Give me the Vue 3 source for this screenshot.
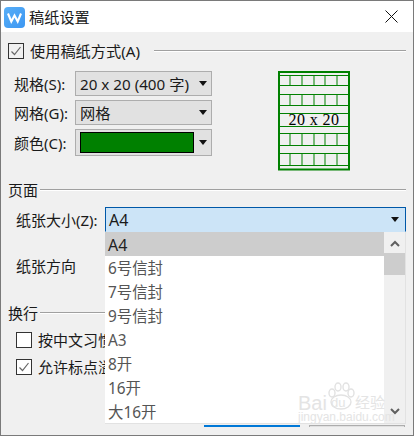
<script setup>
const items = ['A4', '6号信封', '7号信封', '9号信封', 'A3', '8开', '16开', '大16开']
const hLines = [75.5, 85.5, 94.5, 105.5, 113.5, 126.5, 133.5, 145.5, 153.5, 165.5]
const cellRows = [[75.5, 85.5], [94.5, 105.5], [133.5, 145.5], [153.5, 165.5]]
const vLines = [290.5, 302.5, 314.5, 325.5, 337.5]
</script>

<template>
  <div class="dialog">
    <header class="titlebar">
      <svg class="logo" width="21" height="21" viewBox="0 0 21 21">
        <defs>
          <linearGradient id="lg" x1="0" y1="0" x2="1" y2="1">
            <stop offset="0" stop-color="#57aef7" />
            <stop offset="1" stop-color="#3d97f2" />
          </linearGradient>
        </defs>
        <rect x="0" y="0" width="21" height="21" rx="4" fill="url(#lg)" />
        <path d="M4 6.5 L7.3 14.5 L10.5 8.5 L13.7 14.5 L17 6.5" fill="none" stroke="#fff" stroke-width="2.1" />
      </svg>
      <span class="title">稿纸设置</span>
      <svg class="close" width="13" height="13" viewBox="0 0 13 13">
        <path d="M0.5 0.5 L12.5 12.5 M12.5 0.5 L0.5 12.5" stroke="#111" stroke-width="1" fill="none" />
      </svg>
    </header>

    <main class="content">
      <div class="group-head">
        <span class="check">
          <svg width="14" height="14" viewBox="0 0 14 14"><path d="M2.5 7.5 L5.5 10.5 L11.5 3" fill="none" stroke="#666" stroke-width="1.2" /></svg>
        </span>
        <span class="gap-text">使用稿纸方式(A)</span>
        <span class="rule first-rule"></span>
      </div>

      <div class="top-block">
        <div class="fields">
          <div class="field">
            <label>规格(S):</label>
            <div class="select"><span>20 x 20 (400 字)</span><i class="caret"></i></div>
          </div>
          <div class="field">
            <label>网格(G):</label>
            <div class="select"><span>网格</span><i class="caret"></i></div>
          </div>
          <div class="field tall">
            <label>颜色(C):</label>
            <div class="select color"><b class="swatch"></b><i class="caret"></i></div>
          </div>
        </div>
        <svg class="preview" width="72" height="100" viewBox="278.5 71 72 100">
          <line v-for="y in hLines" :key="y" x1="280" x2="349" :y1="y" :y2="y" stroke="#008000" stroke-width="1" />
          <template v-for="r in cellRows" :key="r[0]">
            <line v-for="x in vLines" :key="x" :x1="x" :x2="x" :y1="r[0]" :y2="r[1]" stroke="#008000" stroke-width="1" />
          </template>
          <rect x="279.5" y="72" width="70" height="97.5" fill="none" stroke="#008000" stroke-width="2" />
          <text x="314.5" y="125" text-anchor="middle" class="preview-text">20 x 20</text>
        </svg>
      </div>

      <div class="group-head page-head">
        <span>页面</span>
        <span class="rule"></span>
      </div>

      <div class="paper-row">
        <label>纸张大小(Z):</label>
        <div class="combo-wrap">
          <div class="combo"><span class="big">A4</span><i class="caret"></i></div>
          <div class="dropdown">
            <ul class="list">
              <li v-for="(it, i) in items" :key="it" :class="{ active: i === 0 }">{{ it }}</li>
            </ul>
            <div class="scrollbar">
              <svg class="chev" width="10" height="7" viewBox="0 0 10 7"><path d="M1 6 L5 2 L9 6" fill="none" stroke="#606060" stroke-width="2" /></svg>
              <div class="thumb"></div>
              <svg class="chev down" width="10" height="7" viewBox="0 0 10 7"><path d="M1 1 L5 5 L9 1" fill="none" stroke="#606060" stroke-width="2" /></svg>
            </div>
            <div class="watermark">
              <svg class="paw" width="28" height="28" viewBox="0 0 28 28">
                <g fill="none" stroke="#e2e2e2" stroke-width="1.4">
                  <ellipse cx="5" cy="11" rx="3" ry="4" />
                  <ellipse cx="11" cy="5" rx="3" ry="4" />
                  <ellipse cx="19" cy="5" rx="3" ry="4" />
                  <ellipse cx="24" cy="11" rx="3" ry="4" />
                  <ellipse cx="14" cy="20" rx="10" ry="7" />
                </g>
              </svg>
              <span class="wm-bai">Bai</span>
              <span class="wm-du">du</span>
              <span class="wm-cn">经验</span>
              <span class="wm-url">jingyan.baidu.com</span>
            </div>
          </div>
        </div>
      </div>

      <div class="direction-row">纸张方向</div>

      <div class="group-head wrap-head">
        <span>换行</span>
        <span class="rule"></span>
      </div>

      <div class="option">
        <span class="check"></span>
        <span class="option-text">按中文习惯控制首尾字符</span>
      </div>
      <div class="option">
        <span class="check">
          <svg width="14" height="14" viewBox="0 0 14 14"><path d="M2.5 7.5 L5.5 10.5 L11.5 3" fill="none" stroke="#666" stroke-width="1.2" /></svg>
        </span>
        <span class="option-text">允许标点溢出边界</span>
      </div>

      <footer class="footer">
        <div class="btn primary"></div>
        <div class="btn"></div>
      </footer>
    </main>
  </div>
</template>

<style>
html, body { margin: 0; padding: 0; background: #f0f0f0; }
</style>

<style scoped>
.dialog {
  width: 414px;
  height: 436px;
  box-sizing: border-box;
  border: 1px solid #7a7a7a;
  display: flex;
  flex-direction: column;
  overflow: hidden;
  background: #f0f0f0;
  color: #1a1a1a;
  font-family: "Noto Sans", "Noto Sans CJK SC", sans-serif;
  font-size: 15px;
  line-height: 20px;
}
.titlebar {
  height: 31px;
  flex: none;
  background: #fff;
  display: flex;
  align-items: center;
  padding: 0 15px 0 3px;
}
.logo { flex: none; margin-top: 1px; }
.title { margin-left: 4px; font-size: 15.2px; }
.close { margin-left: auto; margin-top: -1px; }
.content {
  flex: 1;
  min-height: 0;
  display: flex;
  flex-direction: column;
  padding: 9px 7px 8px 7px;
}
.group-head {
  height: 20px;
  display: flex;
  align-items: center;
  flex: none;
}
.gap-text { margin-left: 6px; font-size: 15.2px; }
.rule {
  flex: 1;
  height: 1px;
  background: #a0a0a0;
  margin-left: 2px;
  margin-top: -1px;
  box-shadow: 0 1px 0 #fff;
}
.first-rule { margin-left: 14px; margin-top: -2px; }
.check {
  width: 14px;
  height: 14px;
  flex: none;
  border: 1px solid #333;
  background: #fff;
  display: inline-flex;
}
.group-head > .check { background: transparent; }
.top-block {
  margin-top: 10px;
  height: 99px;
  display: flex;
  align-items: flex-start;
  flex: none;
}
.fields {
  display: flex;
  flex-direction: column;
  gap: 4px;
}
.field {
  display: flex;
  align-items: center;
  height: 25px;
  padding-left: 6px;
}
.field.tall { height: 27px; }
.field label { width: 61px; flex: none; }
.select {
  width: 137px;
  height: 100%;
  box-sizing: border-box;
  border: 1px solid #adadad;
  background: #e1e1e1;
  display: flex;
  align-items: center;
  padding: 0 4px 0 4px;
  white-space: nowrap;
  font-size: 15.2px;
}
.caret {
  margin-left: auto;
  flex: none;
  width: 0;
  height: 0;
  border-left: 4px solid transparent;
  border-right: 4px solid transparent;
  border-top: 5px solid #111;
}
.swatch {
  display: block;
  width: 114px;
  height: 21px;
  box-sizing: border-box;
  background: #008000;
  border: 1px solid #000;
}
.preview { margin-left: 66px; flex: none; display: block; }
.preview-text {
  font-family: "Liberation Serif", serif;
  font-size: 16px;
  letter-spacing: 0.4px;
  fill: #000;
}
.page-head { margin-top: 10px; }
.paper-row {
  margin-top: 7px;
  height: 25px;
  flex: none;
  display: flex;
  align-items: center;
  padding-left: 8px;
}
.paper-row label { width: 89px; flex: none; }
.combo-wrap {
  width: 301px;
  height: 25px;
  position: relative;
  flex: none;
}
.combo {
  height: 25px;
  box-sizing: border-box;
  border: 1px solid #0058a8;
  border-bottom-color: #cce4f7;
  background: #cce4f7;
  display: flex;
  align-items: center;
  padding: 0 6px 0 3px;
}
.big { font-size: 16px; }
.dropdown {
  position: absolute;
  top: 25px;
  left: 0;
  width: 301px;
  height: 192px;
  box-sizing: border-box;
  background: #fff;
  border-right: 1px solid #e2e2e2;
  border-bottom: 1px solid #e2e2e2;
  display: flex;
  z-index: 2;
  overflow: hidden;
}
.list {
  list-style: none;
  margin: 0;
  padding: 0;
  width: 279px;
  flex: none;
  font-size: 15.4px;
}
.list li {
  height: 24px;
  box-sizing: border-box;
  line-height: 24px;
  padding: 1px 0 0 3px;
  color: #555;
}
.list li.active { background: #cdcdcd; color: #222; font-size: 16px; }
.scrollbar {
  flex: 1;
  background: #f0f0f0;
  display: flex;
  flex-direction: column;
  align-items: center;
}
.chev { margin-top: 8px; flex: none; }
.chev.down { margin-top: auto; margin-bottom: 8px; }
.thumb {
  width: 100%;
  height: 22px;
  margin-top: 6px;
  background: #cdcdcd;
  flex: none;
}
.watermark {
  position: absolute;
  left: 193px;
  top: 150px;
  width: 88px;
  height: 41px;
  color: #e4e4e4;
  pointer-events: none;
  font-family: "Liberation Sans", sans-serif;
  white-space: nowrap;
}
.paw { position: absolute; left: 29px; top: 0; }
.wm-bai {
  position: absolute;
  left: 0;
  top: 12px;
  font-size: 20px;
  line-height: 18px;
}
.wm-du {
  position: absolute;
  left: 33px;
  top: 13px;
  font-size: 13px;
  line-height: 16px;
}
.wm-cn {
  position: absolute;
  left: 57px;
  top: 11px;
  font-size: 15px;
  line-height: 18px;
  font-family: "Noto Sans CJK SC", sans-serif;
}
.wm-url {
  position: absolute;
  left: 0;
  top: 30px;
  font-size: 12px;
  line-height: 11px;
}
.direction-row {
  margin-top: 22px;
  height: 24px;
  line-height: 24px;
  padding-left: 8px;
  flex: none;
}
.wrap-head { margin-top: 25px; }
.option {
  margin-top: 5px;
  height: 24px;
  width: 98px;
  display: flex;
  align-items: center;
  gap: 6px;
  padding-left: 8px;
  flex: none;
  white-space: nowrap;
  overflow: hidden;
}
.option-text { overflow: hidden; min-width: 0; }
.option + .option { margin-top: 3px; }
.footer {
  margin-top: auto;
  display: flex;
  justify-content: flex-end;
  gap: 9px;
  padding-right: 1px;
}
.btn {
  width: 96px;
  height: 2px;
  box-sizing: border-box;
  border-top: 1px solid #adadad;
  border-left: 1px solid #adadad;
  border-right: 1px solid #adadad;
  background: #e1e1e1;
}
.btn.primary { background: #0078d7; border-color: #0078d7; }
</style>
